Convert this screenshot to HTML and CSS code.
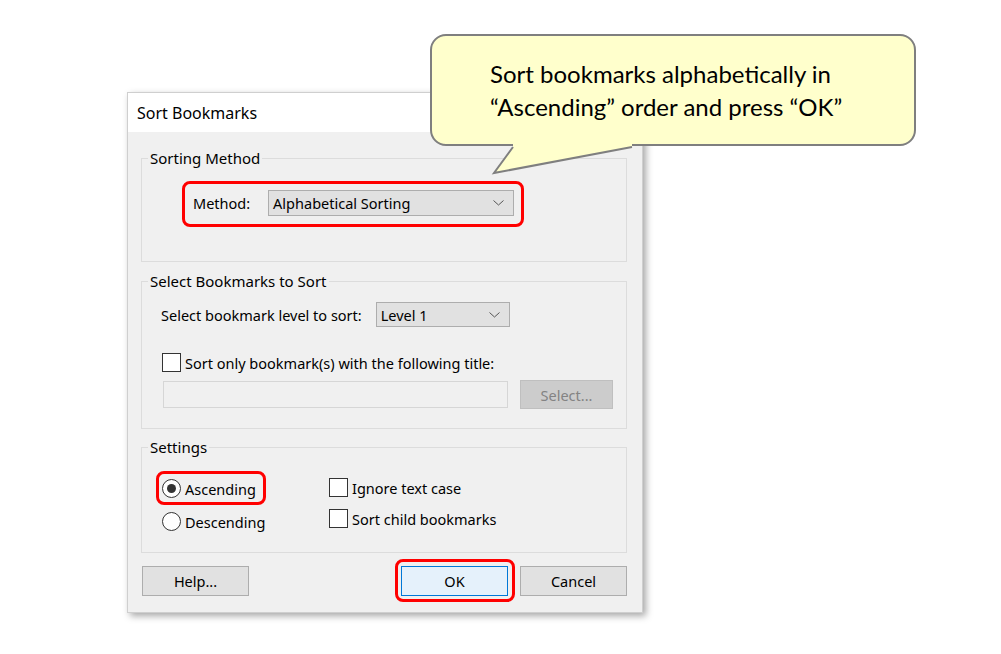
FILE: index.html
```html
<!DOCTYPE html>
<html>
	<head>
		<meta charset="UTF-8">
		<title>Sort Bookmarks</title>
		<link rel="stylesheet" href="styles.css">
	</head>
	<body>
		<div class="stage">
			<div class="dialog">
				<div class="titlebar">Sort Bookmarks</div>
				<div class="content">
					<fieldset class="group group-method">
						<legend>Sorting Method</legend>
						<div class="inner">
							<div class="mark mark-method">
								<span class="lbl">Method:</span>
								<div class="combo combo-wide">
									<span>Alphabetical Sorting</span>
									<svg class="chev" width="11" height="6" viewBox="0 0 11 6"><path d="M0.5 0.5 L5.5 5 L10.5 0.5" fill="none" stroke="#555" stroke-width="1"/></svg>
								</div>
							</div>
						</div>
					</fieldset>

					<fieldset class="group group-select">
						<legend>Select Bookmarks to Sort</legend>
						<div class="inner">
							<div class="row row-level">
								<span class="lbl">Select bookmark level to sort:</span>
								<div class="combo combo-level">
									<span>Level 1</span>
									<svg class="chev" width="11" height="6" viewBox="0 0 11 6"><path d="M0.5 0.5 L5.5 5 L10.5 0.5" fill="none" stroke="#555" stroke-width="1"/></svg>
								</div>
							</div>
							<div class="row row-check">
								<span class="box"></span>
								<span class="lbl">Sort only bookmark(s) with the following title:</span>
							</div>
							<div class="row row-title">
								<div class="input"></div>
								<div class="btn btn-disabled">Select...</div>
							</div>
						</div>
					</fieldset>

					<fieldset class="group group-settings">
						<legend>Settings</legend>
						<div class="inner settings">
							<div class="col col-radio">
								<div class="opt mark mark-asc"><span class="radio checked"></span><span class="lbl">Ascending</span></div>
								<div class="opt"><span class="radio"></span><span class="lbl">Descending</span></div>
							</div>
							<div class="col col-check">
								<div class="opt"><span class="box"></span><span class="lbl">Ignore text case</span></div>
								<div class="opt"><span class="box"></span><span class="lbl">Sort child bookmarks</span></div>
							</div>
						</div>
					</fieldset>

					<div class="buttons">
						<div class="btn btn-help">Help...</div>
						<div class="btn btn-ok mark mark-ok">OK</div>
						<div class="btn btn-cancel">Cancel</div>
					</div>
				</div>
			</div>

			<div class="callout">
				<svg class="tail" width="490" height="145" viewBox="0 0 490 145">
					<path d="M83 109 L83 113 L64 139 L202 113 L202 109 Z" fill="#ffffcc"/>
					<path d="M83 113 L64 139 L202 113" fill="none" stroke="#7f7f7f" stroke-width="2" stroke-linejoin="miter"/>
				</svg>
				<p>Sort bookmarks alphabetically in<br>“Ascending” order and press “OK”</p>
			</div>
		</div>
	</body>
</html>
```

FILE: styles.css
```css
body{
	margin: 0;
	padding: 0;
	background: #fff;
	font-family: "Noto Sans", "Open Sans", sans-serif;
	color: #000;
}
.stage{
	position: relative;
	width: 1001px;
	height: 654px;
	padding: 92px 0 0 127px;
	box-sizing: border-box;
	overflow: hidden;
}

/* dialog */
.dialog{
	width: 514px;
	height: 519px;
	border: 1px solid #cfcfcf;
	background: #f0f0f0;
	box-shadow: 3px 3px 7px rgba(0,0,0,0.35);
	font-size: 14.5px;
}
.titlebar{
	height: 39px;
	line-height: 40px;
	background: #fff;
	padding-left: 9px;
	font-size: 16px;
}
.content{
	padding: 0 15px 0 13px;
}
.group{
	margin: 0;
	padding: 0;
	border: 1px solid #dcdcdc;
	box-sizing: border-box;
}
.group legend{
	padding: 0 2px;
	margin-left: 6px;
	line-height: 20px;
	font-size: 15px;
}
.group-method{
	margin-top: 16px;
	height: 114px;
}
.group-method .inner{
	padding: 13px 0 0 40px;
}
.group-select{
	margin-top: 9px;
	height: 158px;
}
.group-select .inner{
	padding: 11px 13px 0 19px;
}
.group-settings{
	margin-top: 8px;
	height: 116px;
}
.group-settings .inner{
	padding: 0 0 0 20px;
}

.lbl{
	white-space: nowrap;
}

/* red annotation frames */
.mark{
	position: relative;
}
.mark::after{
	content: "";
	position: absolute;
	border: 3px solid #ff0000;
	border-radius: 8px;
	pointer-events: none;
}
.mark-method{
	display: inline-flex;
	align-items: center;
	padding: 9px 10px 11px 11px;
}
.mark-method::after{
	inset: 0;
}
.mark-method .lbl{
	margin-right: 18px;
}
.mark-asc{
	align-self: flex-start;
}
.mark-asc::after{
	inset: -8px -10px -7px -6px;
}
.mark-ok::after{
	inset: -8px -8px -7px -7px;
}

/* combo boxes */
.combo{
	display: flex;
	align-items: center;
	justify-content: space-between;
	height: 26px;
	box-sizing: border-box;
	border: 1px solid #adadad;
	background: #e1e1e1;
	padding: 0 9px 0 4px;
}
.combo-wide{
	width: 246px;
}
.combo-level{
	width: 134px;
	height: 25px;
	margin-left: 14px;
}
.chev{
	display: block;
}

.row{
	display: flex;
	align-items: center;
}
.row-level{
	height: 25px;
}
.row-check{
	margin-top: 26px;
	height: 19px;
	margin-left: 1px;
}
.row-title{
	margin-top: 8px;
	justify-content: space-between;
	margin-left: 2px;
}

/* check boxes and radios */
.box, .radio{
	display: inline-block;
	flex: none;
	width: 19px;
	height: 19px;
	box-sizing: border-box;
	border: 1px solid #333;
	background: #fff;
	margin-right: 4px;
}
.radio{
	border-radius: 50%;
	position: relative;
}
.radio.checked::after{
	content: "";
	position: absolute;
	left: 4px;
	top: 4px;
	width: 9px;
	height: 9px;
	border-radius: 50%;
	background: #333;
}

.input{
	width: 345px;
	height: 27px;
	box-sizing: border-box;
	border: 1px solid #d6d6d6;
	background: #f0f0f0;
}

/* buttons */
.btn{
	display: flex;
	align-items: center;
	justify-content: center;
	height: 30px;
	box-sizing: border-box;
	border: 1px solid #adadad;
	background: #e1e1e1;
}
.btn-disabled{
	width: 93px;
	height: 29px;
	background: #cccccc;
	border-color: #bfbfbf;
	color: #838383;
}

.settings{
	display: flex;
}
.col{
	display: flex;
	flex-direction: column;
}
.col-radio{
	width: 167px;
	gap: 14px;
	padding-top: 22px;
}
.col-check{
	gap: 12px;
	padding-top: 21px;
}
.opt{
	display: flex;
	align-items: center;
	height: 19px;
}

.buttons{
	display: flex;
	margin-top: 13px;
	padding-left: 1px;
}
.btn-help{
	width: 107px;
}
.btn-ok{
	width: 107px;
	margin-left: 152px;
	background: #e5f1fb;
	border-color: #0078d7;
}
.btn-cancel{
	width: 107px;
	margin-left: 12px;
}

/* callout */
.callout{
	position: absolute;
	left: 430px;
	top: 34px;
	width: 486px;
	height: 112px;
	box-sizing: border-box;
	border: 2px solid #7f7f7f;
	border-radius: 16px;
	background: #ffffcc;
}
.callout .tail{
	position: absolute;
	left: -2px;
	top: -2px;
	overflow: visible;
}
.callout p{
	position: relative;
	margin: 0;
	padding: 21px 0 0 58px;
	font-family: "Lato", "Liberation Sans", sans-serif;
	font-size: 24px;
	line-height: 33px;
	color: #000;
}
```
